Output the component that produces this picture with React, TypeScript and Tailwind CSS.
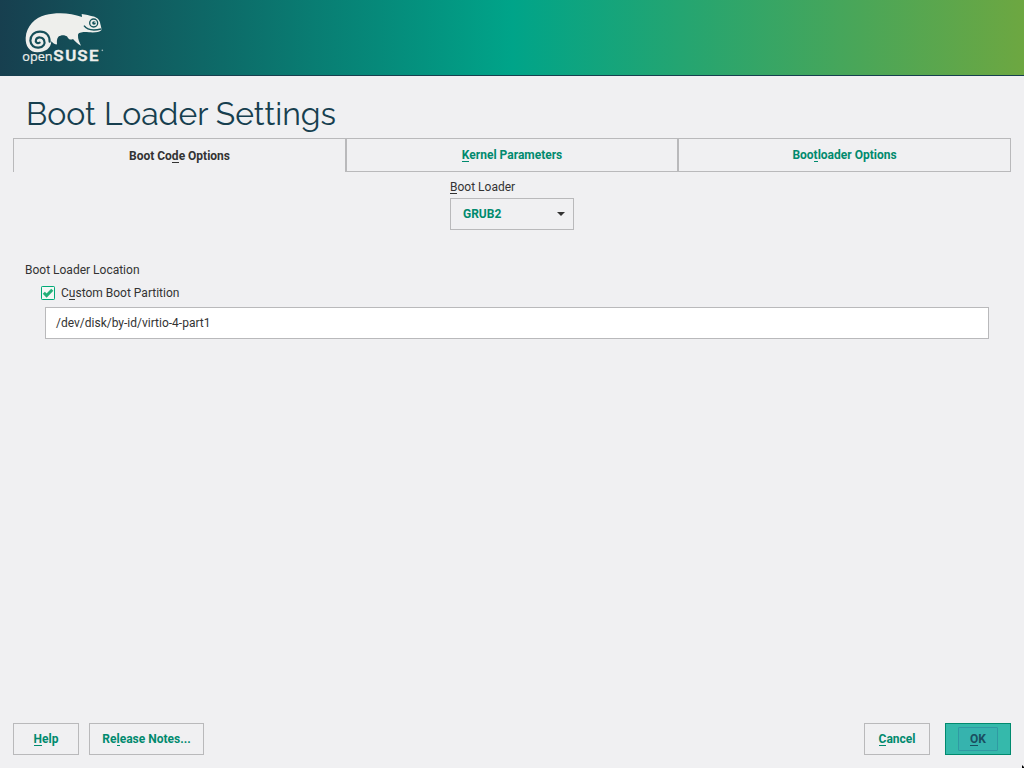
import React from "react";

function Key({ children }: { children: React.ReactNode }) {
  return <span className="inline-block h-[14px] border-b border-current leading-[14px]">{children}</span>;
}

function Logo() {
  return (
    <svg width="130" height="75" viewBox="0 0 390 225" className="block" role="img" aria-label="openSUSE">
      <path
        fill="#eeefec"
        d="M112 157C88 156 76 138 77 113C79 79 105 53 136 45C170 36 213 38 246 51L245 42C258 44 269 46 277 49C291 51 300 60 301 72C303 79 305 87 304 91C298 97 284 98 267 97C249 95 235 97 234 105C233 117 239 128 243 137C233 132 225 124 219 117C211 121 205 117 202 110C195 104 183 104 175 110C169 118 171 126 171 133C163 134 158 129 154 124C153 145 136 157 112 157Z"
      />
      <path
        fill="none"
        stroke="#164f59"
        strokeWidth="6.5"
        strokeLinecap="round"
        d="M149 125C149 107 139 95 120 95C102 95 91 107 91 122C92 137 103 144 116 143C130 142 137 131 132 120C127 110 112 110 108 119C105 127 112 132 119 128"
      />
      <path fill="none" stroke="#14535b" strokeWidth="4.5" d="M252 77C263 92 282 92 303 87" />
      <circle cx="281" cy="69" r="12" fill="none" stroke="#14535b" strokeWidth="4" />
      <circle cx="282" cy="69" r="5.5" fill="#14535b" />
      <circle cx="285" cy="67" r="2" fill="#eeefec" />
      <text x="67" y="184" textLength="91" lengthAdjust="spacingAndGlyphs" fill="#eeefec" stroke="#eeefec" strokeWidth=".6" fontFamily="Open Sans, sans-serif" fontSize="40">open</text>
      <text x="145.5 178 210.5 243" y="183" transform="scale(1.1 1)" fill="#eeefec" stroke="#eeefec" strokeWidth="1" fontFamily="Roboto, sans-serif" fontWeight="600" fontSize="46">SUSE</text>
      <circle cx="307" cy="151" r="2.5" fill="#a7bdbd" />
    </svg>
  );
}

const button = "flex h-8 items-center justify-center border border-[#b9b9bb] pb-px font-bold text-[#008a6e]";

export default function App() {
  return (
    <div className="flex h-[768px] w-[1024px] flex-col overflow-hidden bg-[#f0f0f2] text-[12px] leading-[14px] text-[#333] [font-family:Roboto,sans-serif]">
      <header className="h-[76px] shrink-0 border-b border-[#173f4f] bg-[linear-gradient(to_right_in_srgb,#173f4f,#00a489_50%,#6da741)]">
        <Logo />
      </header>

      <main className="flex flex-1 flex-col px-[13px] pb-[13px]">
        <h1 className="h-[62px] pl-[13px] pt-[18px] text-[32px] leading-10 text-[#173f4f] [font-family:Raleway,Lato,sans-serif]">
          <svg width="316" height="42" className="block overflow-visible">
            <text x="0" y="31" textLength="310" lengthAdjust="spacingAndGlyphs" fill="currentColor">Boot Loader Settings</text>
          </svg>
        </h1>

        <nav className="flex h-[34px] font-bold">
          <div className="flex w-[333px] items-center justify-center border-l border-r border-t border-[#b9b9bb]">
            <span>Boot Co<Key>d</Key>e Options</span>
          </div>
          <div className="flex w-[332px] items-center justify-center border border-[#b9b9bb] pb-px text-[#008a6e]">
            <span><Key>K</Key>ernel Parameters</span>
          </div>
          <div className="flex w-[333px] items-center justify-center border border-[#b9b9bb] pb-px text-[#008a6e]">
            <span>Boo<Key>t</Key>loader Options</span>
          </div>
        </nav>

        <section className="flex flex-1 flex-col">
          <div className="ml-[437px] mt-2 w-[124px]">
            <div className="h-[18px]"><Key>B</Key>oot Loader</div>
            <div className="flex h-8 items-center justify-between border border-[#b9b9bb] pl-3 pr-2 font-bold text-[#008a6e]">
              <span>GRUB2</span>
              <svg width="8" height="4" viewBox="0 0 8 4"><path d="M0 0H8L4 4Z" fill="#333" /></svg>
            </div>
          </div>

          <div className="mt-[33px] pl-3">Boot Loader Location</div>
          <div className="mt-[9px] flex items-center pl-7">
            <svg width="14" height="14" viewBox="0 0 14 14" className="mr-[6px]">
              <rect x=".5" y=".5" width="13" height="13" rx=".7" fill="#f4f8f6" stroke="#00a978" />
              <path d="M2.8 6.8L5.6 9.6L11.3 3.8" fill="none" stroke="#22b078" strokeWidth="3" />
            </svg>
            <span>C<Key>u</Key>stom Boot Partition</span>
          </div>
          <div className="ml-8 mr-[22px] mt-[7px] flex h-8 items-center border border-[#b9b9bb] bg-white pl-[10px]">
            /dev/disk/by-id/virtio-4-part1
          </div>
        </section>

        <footer className="flex h-8 items-center">
          <button className={`${button} w-[66px]`}><span><Key>H</Key>elp</span></button>
          <button className={`${button} ml-[10px] w-[115px]`}><span>Re<Key>l</Key>ease Notes...</span></button>
          <button className={`${button} ml-auto w-[66px]`}><span><Key>C</Key>ancel</span></button>
          <button className="ml-[15px] flex h-8 w-[66px] items-center justify-center border border-[#008a6e] bg-[#35b9ab] font-bold text-[#1a4e60]">
            <span className="flex h-6 w-10 items-center justify-center rounded-[1px] border border-[#309aa3] bg-[#36b3ae] pb-px"><span><Key>O</Key>K</span></span>
          </button>
        </footer>
      </main>
      <svg width="2" height="3" viewBox="0 0 2 3" className="absolute left-[1022px] top-[765px]"><path d="M0 0L2 2V3H0Z" fill="#000" /></svg>
    </div>
  );
}
